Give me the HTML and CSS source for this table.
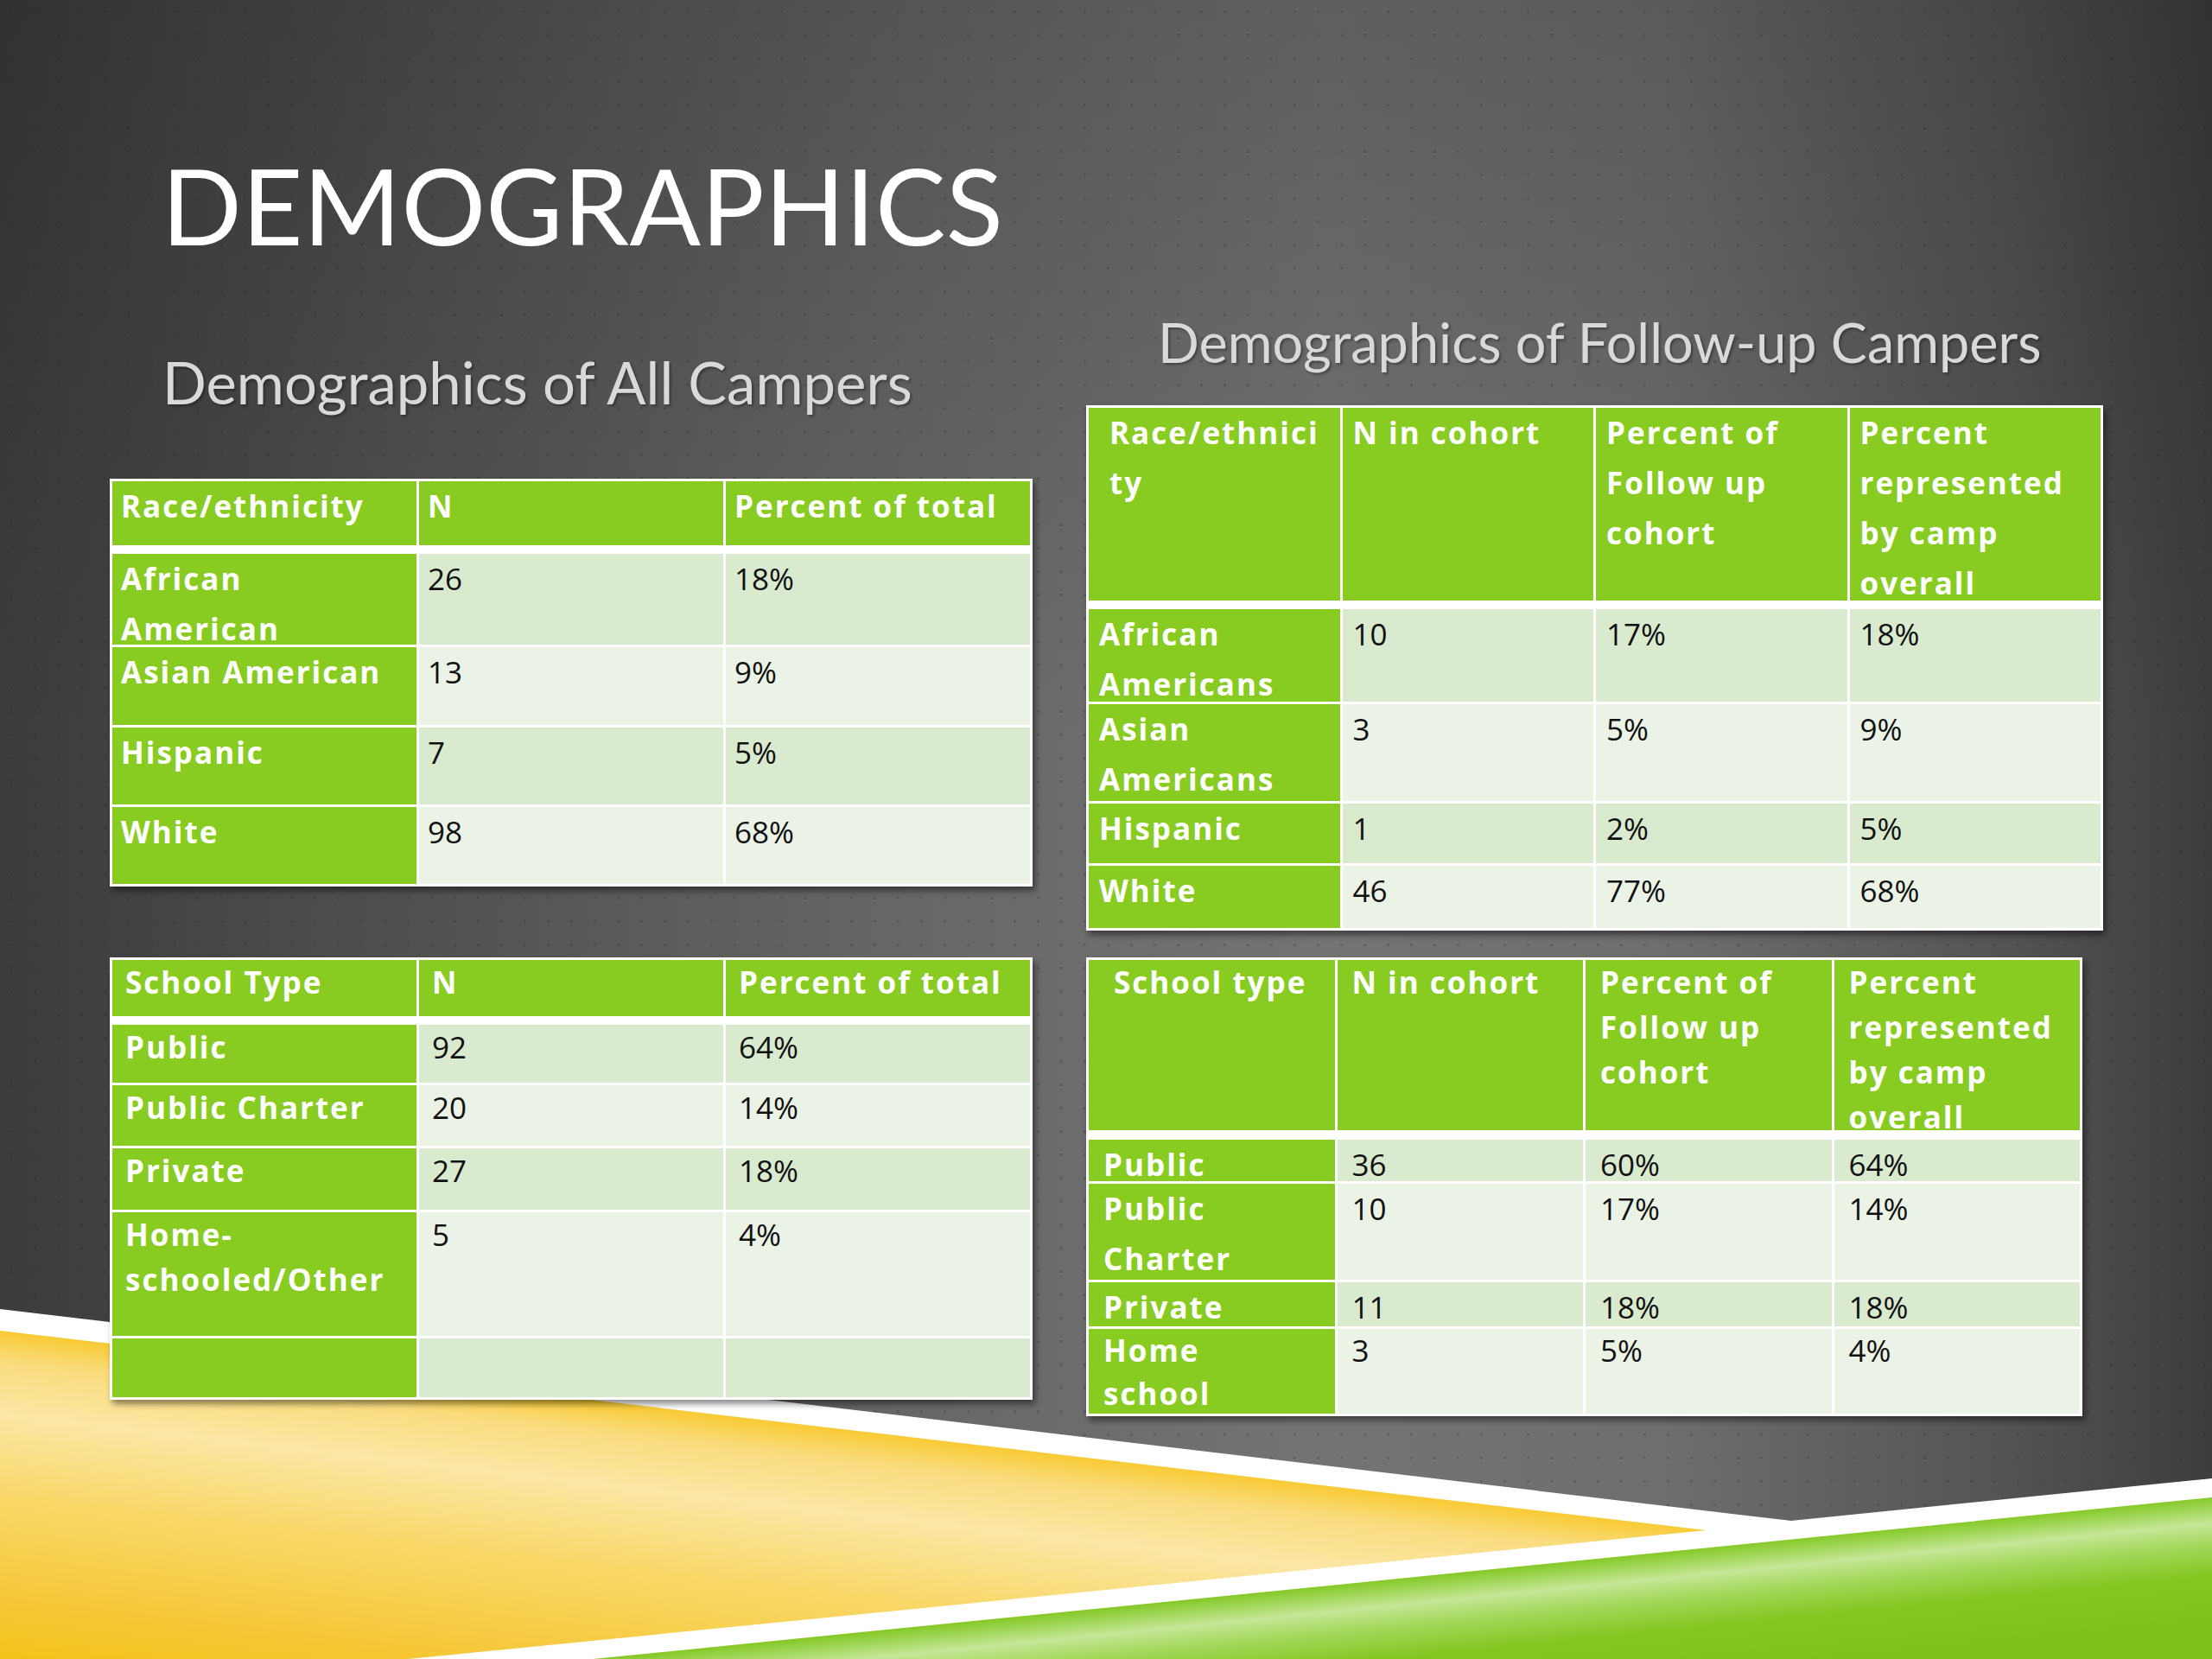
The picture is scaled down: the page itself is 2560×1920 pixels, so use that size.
FILE: index.html
```html
<!DOCTYPE html>
<html lang="en">
<head>
<meta charset="utf-8">
<title>Demographics</title>
<link rel="stylesheet" href="styles.css">
</head>
<body>
<div class="slide">
  <svg class="deco" viewBox="0 0 2560 1920" width="2560" height="1920" aria-hidden="true">
    <defs>
      <linearGradient id="gy" gradientUnits="userSpaceOnUse" x1="1000" y1="1658" x2="956" y2="2035">
        <stop offset="0" stop-color="#f8cb36"/>
        <stop offset="0.09" stop-color="#fadc7e"/>
        <stop offset="0.25" stop-color="#fbe6a4"/>
        <stop offset="0.5" stop-color="#f9d868"/>
        <stop offset="0.8" stop-color="#f6c83a"/>
        <stop offset="1" stop-color="#f5c118"/>
      </linearGradient>
      <linearGradient id="gg" gradientUnits="userSpaceOnUse" x1="1700" y1="1819" x2="1715" y2="1968">
        <stop offset="0" stop-color="#86c928"/>
        <stop offset="0.2" stop-color="#c4e796"/>
        <stop offset="0.36" stop-color="#a4d85c"/>
        <stop offset="0.6" stop-color="#84c723"/>
        <stop offset="1" stop-color="#7cc11b"/>
      </linearGradient>
    </defs>
    <polygon points="0,1515 2073,1760 2560,1711 2560,1920 0,1920" fill="#ffffff"/>
    <polygon points="0,1540 1975,1771 473,1920 0,1920" fill="url(#gy)"/>
    <polygon points="686,1920 2560,1733 2560,1920" fill="url(#gg)"/>
  </svg>

  <main class="content">
    <h1 class="title">DEMOGRAPHICS</h1>

    <div class="panels">
      <section class="panel panel-left">
        <h2 class="subtitle subtitle-left">Demographics of All Campers</h2>
        <div class="tbl tbl-a">
          <div class="c h">Race/ethnicity</div>
          <div class="c h">N</div>
          <div class="c h">Percent of total</div>

          <div class="c k">African<br>American</div>
          <div class="c v b1">26</div>
          <div class="c v b1">18%</div>

          <div class="c k">Asian American</div>
          <div class="c v b2">13</div>
          <div class="c v b2">9%</div>

          <div class="c k">Hispanic</div>
          <div class="c v b1">7</div>
          <div class="c v b1">5%</div>

          <div class="c k">White</div>
          <div class="c v b2">98</div>
          <div class="c v b2">68%</div>
        </div>
      </section>

      <section class="panel panel-right">
        <h2 class="subtitle subtitle-right">Demographics of Follow-up Campers</h2>
        <div class="tbl tbl-c">
          <div class="c h ind">Race/ethnici<wbr>ty</div>
          <div class="c h">N in cohort</div>
          <div class="c h">Percent of Follow up cohort</div>
          <div class="c h">Percent represented by camp overall</div>

          <div class="c k">African Americans</div>
          <div class="c v b1">10</div>
          <div class="c v b1">17%</div>
          <div class="c v b1">18%</div>

          <div class="c k">Asian Americans</div>
          <div class="c v b2">3</div>
          <div class="c v b2">5%</div>
          <div class="c v b2">9%</div>

          <div class="c k">Hispanic</div>
          <div class="c v b1">1</div>
          <div class="c v b1">2%</div>
          <div class="c v b1">5%</div>

          <div class="c k">White</div>
          <div class="c v b2">46</div>
          <div class="c v b2">77%</div>
          <div class="c v b2">68%</div>
        </div>
      </section>

      <div class="tbl tbl-b">
        <div class="c h">School Type</div>
        <div class="c h">N</div>
        <div class="c h">Percent of total</div>

        <div class="c k">Public</div>
        <div class="c v b1">92</div>
        <div class="c v b1">64%</div>

        <div class="c k">Public Charter</div>
        <div class="c v b2">20</div>
        <div class="c v b2">14%</div>

        <div class="c k">Private</div>
        <div class="c v b1">27</div>
        <div class="c v b1">18%</div>

        <div class="c k">Home-<br>schooled/Other</div>
        <div class="c v b2">5</div>
        <div class="c v b2">4%</div>

        <div class="c k"></div>
        <div class="c v b1"></div>
        <div class="c v b1"></div>
      </div>

      <div class="tbl tbl-d">
        <div class="c h ind">School type</div>
        <div class="c h">N in cohort</div>
        <div class="c h">Percent of Follow up cohort</div>
        <div class="c h">Percent represented by camp overall</div>

        <div class="c k">Public</div>
        <div class="c v b1">36</div>
        <div class="c v b1">60%</div>
        <div class="c v b1">64%</div>

        <div class="c k">Public<br>Charter</div>
        <div class="c v b2">10</div>
        <div class="c v b2">17%</div>
        <div class="c v b2">14%</div>

        <div class="c k">Private</div>
        <div class="c v b1">11</div>
        <div class="c v b1">18%</div>
        <div class="c v b1">18%</div>

        <div class="c k tight">Home<br>school</div>
        <div class="c v b2 tight">3</div>
        <div class="c v b2 tight">5%</div>
        <div class="c v b2 tight">4%</div>
      </div>
    </div>
  </main>
</div>
</body>
</html>
```

FILE: styles.css
```css
* { box-sizing: border-box; }

html, body {
  margin: 0;
  padding: 0;
  background: #3c3c3c;
}

.slide {
  position: relative;
  width: 2560px;
  height: 1920px;
  overflow: hidden;
  background:
    radial-gradient(circle, rgba(25, 25, 25, 0.22) 1.2px, transparent 1.9px) 0 0 / 27px 27px,
    linear-gradient(to bottom, rgba(0, 0, 0, 0.18) 0%, rgba(0, 0, 0, 0) 45%),
    linear-gradient(to right, #3c3c3c 0%, #505050 18%, #666666 40%, #747474 60%, #6e6e6e 75%, #535353 91%, #3d3d3d 100%);
}

.deco {
  position: absolute;
  left: 0;
  top: 0;
  z-index: 0;
  display: block;
}

.content {
  position: relative;
  z-index: 1;
  padding-top: 164px;
}

.title {
  margin: 0;
  padding-left: 187px;
  font-family: Lato, "Open Sans", sans-serif;
  font-weight: 400;
  font-size: 122px;
  line-height: 1.2;
  color: #ffffff;
  letter-spacing: 0.3px;
}

.panels {
  margin: 45px 0 0 127px;
  display: grid;
  grid-template-columns: 1068px 1177px;
  column-gap: 62px;
  row-gap: 31px;
  align-items: start;
}

.subtitle {
  margin: 0;
  font-family: Lato, "Open Sans", sans-serif;
  font-weight: 400;
  line-height: 1.2;
  color: #d9d9d9;
  text-shadow: 2px 2px 3px rgba(0, 0, 0, 0.35);
  white-space: nowrap;
}

.subtitle-left {
  font-size: 67px;
  margin: 47px 0 71px;
  padding-left: 61px;
}

.subtitle-right {
  font-size: 63px;
  margin: 3px 0 35px;
  padding-left: 83px;
}

/* tables */
.tbl {
  display: grid;
  background: #ffffff;
  padding: 3px;
  gap: 3px;
  box-shadow: 3px 5px 7px rgba(0, 0, 0, 0.45);
  font-family: "Open Sans", "DejaVu Sans", sans-serif;
  font-size: 35px;
  line-height: 58px;
}

.tbl-a {
  width: 1068px;
  grid-template-columns: repeat(3, 1fr);
  grid-template-rows: 81px 105px 90px 89px 89px;
}

.tbl-b {
  width: 1068px;
  grid-template-columns: repeat(3, 1fr);
  grid-template-rows: 72px 67px 70px 71px 143px 68px;
  line-height: 52px;
}

.tbl-c {
  width: 1177px;
  grid-template-columns: repeat(4, 1fr);
  grid-template-rows: 230px 107px 112px 69px 72px;
}

.tbl-d {
  width: 1153px;
  grid-template-columns: repeat(4, 1fr);
  grid-template-rows: 205px 48px 111px 51px 98px;
}

.c {
  min-width: 0;
  min-height: 0;
  padding: 0 4px 0 10px;
}

.tbl-b .c { padding-left: 15px; }
.tbl-c .c { padding-left: 12px; }
.tbl-d .c { padding-left: 17px; }

.h {
  background: #88cc22;
  color: #ffffff;
  font-weight: 700;
  letter-spacing: 2px;
  margin-bottom: 7px;
}

.tbl-d .h {
  margin-bottom: 8px;
  line-height: 52px;
}

.tbl-c .ind { padding-left: 24px; }
.tbl-d .ind { padding-left: 29px; }

.k {
  background: #88cc22;
  color: #ffffff;
  font-weight: 700;
  letter-spacing: 2px;
}

.tight { line-height: 50px; }

.v {
  color: #111111;
  font-weight: 400;
}

.b1 { background: #d9eacf; }
.b2 { background: #ebf3e6; }
```
